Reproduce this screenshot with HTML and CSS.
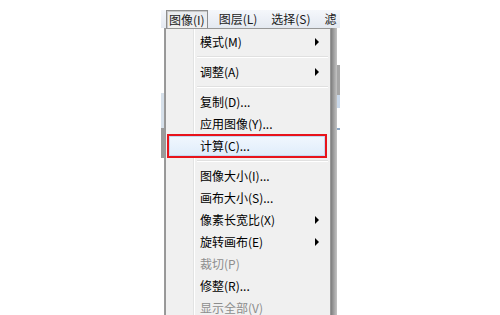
FILE: index.html
```html
<!DOCTYPE html>
<html lang="zh-CN">
<head>
    <meta charset="UTF-8"/>
    <title>图像菜单</title>
    <link rel="stylesheet" href="styles.css">
</head>
<body>
<div class="shot">
    <div class="menubar">
        <span class="top-item open">图像(I)</span>
        <span class="top-item">图层(L)</span>
        <span class="top-item">选择(S)</span>
        <span class="top-item">滤</span>
    </div>

    <div class="drop-row">
        <div class="bg-left"></div>
        <ul class="menu">
            <li class="item sub">模式(M)</li>
            <li class="sep"></li>
            <li class="item sub">调整(A)</li>
            <li class="sep"></li>
            <li class="item">复制(D)...</li>
            <li class="item">应用图像(Y)...</li>
            <li class="item marked">计算(C)...</li>
            <li class="sep"></li>
            <li class="item">图像大小(I)...</li>
            <li class="item">画布大小(S)...</li>
            <li class="item sub">像素长宽比(X)</li>
            <li class="item sub">旋转画布(E)</li>
            <li class="item off">裁切(P)</li>
            <li class="item">修整(R)...</li>
            <li class="item off">显示全部(V)</li>
        </ul>
        <div class="shadow"></div>
        <div class="bg-right"></div>
    </div>
</div>
</body>
</html>
```

FILE: styles.css
```css
html, body {
    margin: 0;
    padding: 0;
    background: #fff;
}

body {
    font-family: "Noto Sans CJK SC", "Liberation Sans", sans-serif;
    font-size: 12px;
    color: #000;
}

.shot {
    width: 179px;
    height: 305px;
    margin: 10px 0 0 161px;
    overflow: hidden;
}

/* top menu bar */
.menubar {
    height: 18px;
    display: flex;
    align-items: stretch;
    gap: 8px;
    padding-left: 5px;
    background: linear-gradient(#f5f7fb, #e4e9f1);
    white-space: nowrap;
}

.top-item {
    display: flex;
    align-items: center;
    padding: 0 3px;
    line-height: 1;
    color: #1a1a1a;
}

.top-item.open {
    padding: 0 2px;
    border: 1px solid #8d8d8d;
    border-bottom: none;
    background: linear-gradient(#e9ebee, #f0f0f0);
    box-shadow: inset 1px 1px 0 #c7c7c7;
}

/* dropdown row */
.drop-row {
    display: flex;
    height: 310px;
}

.bg-left {
    width: 4px;
    background:
        linear-gradient(to right, transparent 3px, #9a9a9a 3px),
        linear-gradient(#fff 0 65px, #d6e0ea 65px 100px, #9a9a9a 100px 130px, #fff 130px);
}

.menu {
    list-style: none;
    margin: 0;
    padding: 2px;
    width: 166px;
    box-sizing: border-box;
    border: 1px solid #979797;
    background: linear-gradient(to right, #f0f0f0 27px, #e2e3e3 27px 28px, #fff 28px 29px, #f0f0f0 29px);
}

.item {
    height: 22px;
    display: flex;
    align-items: center;
    padding-left: 32px;
    line-height: 1;
}

.item.sub::after {
    content: "";
    margin-left: auto;
    margin-right: 9px;
    border-left: 4px solid #000;
    border-top: 4px solid transparent;
    border-bottom: 4px solid transparent;
}

.item.off {
    color: #8d8d8d;
}

.item.marked {
    height: 24px;
    margin: -1px 1px -1px -1px;
    padding-left: 31px;
    box-sizing: border-box;
    border: 2px solid #e8131b;
    background: linear-gradient(#f1f7fe, #dfecfb);
    box-shadow: inset 0 0 0 1px #c3d9f1;
}

.sep {
    height: 8px;
    margin-left: 29px;
    background: linear-gradient(transparent 3px, #e0e0e0 3px 4px, #fff 4px 5px, transparent 5px);
}

.shadow {
    width: 6px;
    background: linear-gradient(to right, #7e7e7e, #a2a2a2 50%, #c4c4c4);
}

.bg-right {
    width: 3px;
    background: linear-gradient(#fff 0 37px, #a6a6a6 37px 67px, #c9d8ea 67px 80px, #fff 80px 100px, #8ea8c4 100px 102px, #fff 102px);
}
```
